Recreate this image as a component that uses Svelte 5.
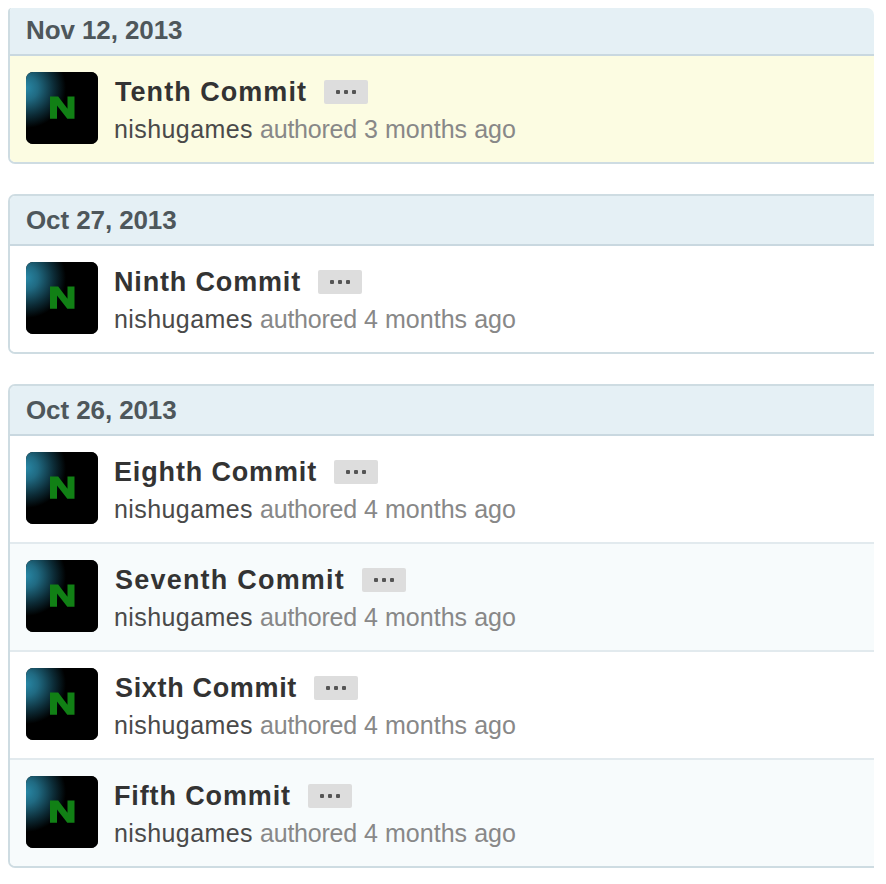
<script>
  const groups = [
    { date: 'Nov 12, 2013', commits: [{ title: 'Tenth Commit', indent: 1, width: 192, age: '3', unread: true }] },
    { date: 'Oct 27, 2013', commits: [{ title: 'Ninth Commit', indent: 0, width: 186, age: '4' }] },
    {
      date: 'Oct 26, 2013',
      commits: [
        { title: 'Eighth Commit', indent: 0, width: 202, age: '4' },
        { title: 'Seventh Commit', indent: 1, width: 230, age: '4' },
        { title: 'Sixth Commit', indent: 1, width: 182, age: '4' },
        { title: 'Fifth Commit', indent: 0, width: 176, age: '4' }
      ]
    }
  ];

  // Spread the letters so that each text fills its column width.
  function fit(node, width) {
    const range = document.createRange();
    range.selectNodeContents(node);
    const natural = range.getBoundingClientRect().width;
    node.style.letterSpacing = `${(width - natural) / node.textContent.length}px`;
  }
</script>

<main>
  {#each groups as group, g}
    <section class:first={g === 0}>
      <h3>{group.date}</h3>
      <ol>
        {#each group.commits as c}
          <li class:unread={c.unread}>
            <svg class="avatar" viewBox="0 0 72 72" width="72" height="72" aria-hidden="true">
              <defs>
                <radialGradient id="glow" gradientUnits="userSpaceOnUse" cx="0" cy="16" r="40">
                  <stop offset="0" stop-color="#2887a5" />
                  <stop offset="0.3" stop-color="#206a82" />
                  <stop offset="0.7" stop-color="#0c2b36" />
                  <stop offset="1" stop-color="#000" />
                </radialGradient>
              </defs>
              <rect width="72" height="72" rx="7" fill="#000" />
              <rect width="72" height="72" rx="7" fill="url(#glow)" />
              <path d="M24 24.5h8.2l9.3 12.3V24.5h7v22.3h-7.2L31 33.5v13.3h-7z" fill="#118015" />
            </svg>
            <div class="text">
              <div class="line">
                <span class="title" style:width="{c.width}px" style:text-indent="{c.indent}px"><span use:fit={c.width + 1 - c.indent}>{c.title}</span></span>
                <button aria-label="Show description"><i></i><i></i><i></i></button>
              </div>
              <p><span class="author" use:fit={139}>nishugames</span><span class="verb" use:fit={97}>authored</span><span use:fit={152}>{c.age} months ago</span></p>
            </div>
          </li>
        {/each}
      </ol>
    </section>
  {/each}
</main>

<style>
  :global(body) { background: #fff; }
  main {
    box-sizing: border-box;
    width: 874px;
    height: 884px;
    padding: 8px 0 0 8px;
    overflow: hidden;
    font-family: "Liberation Sans", Arial, sans-serif;
  }
  section {
    box-sizing: border-box;
    border: 2px solid #cedce2;
    border-right: 0;
    border-radius: 7px 0 0 7px;
    margin-bottom: 30px;
    overflow: hidden;
  }
  section.first { border-top: 0; border-radius: 4px 7px 0 7px; }
  h3 {
    box-sizing: border-box;
    height: 50px;
    margin: 0;
    padding-left: 16px;
    border-bottom: 2px solid #c9d8e0;
    background: #e5f0f5;
    color: #4e575b;
    font-size: 26px;
    line-height: 49px;
    letter-spacing: -0.1px;
    white-space: pre;
  }
  .first h3 { height: 48px; line-height: 45px; }
  ol { list-style: none; margin: 0; padding: 0; }
  li {
    box-sizing: content-box;
    height: 106px;
    display: flex;
    align-items: flex-start;
    border-bottom: 2px solid #e2eaee;
    background: #fff;
  }
  li:last-child { border-bottom: 0; }
  li:nth-child(even) { background: #f7fbfc; }
  li.unread { background: #fcfce2; }
  .avatar { margin: 16px 16px 0; flex: none; }
  .text { padding-top: 20px; }
  .line { display: flex; align-items: center; height: 32px; }
  .title {
    flex: none;
    font-size: 27px;
    font-weight: 700;
    line-height: 32px;
    color: #333;
    white-space: nowrap;
  }
  button {
    display: flex;
    align-items: center;
    justify-content: center;
    gap: 4px;
    width: 44px;
    height: 24px;
    margin: 0 0 0 18px;
    padding: 0;
    border: 0;
    border-radius: 2px;
    background: #ddd;
  }
  i { width: 4px; height: 4px; border-radius: 1px; background: #555; }
  p { display: flex; margin: 5px 0 0; font-size: 25px; line-height: 32px; color: #888; white-space: nowrap; }
  .author { color: #4a4a4a; margin-right: 7px; }
  .verb { margin-right: 7px; }
</style>
